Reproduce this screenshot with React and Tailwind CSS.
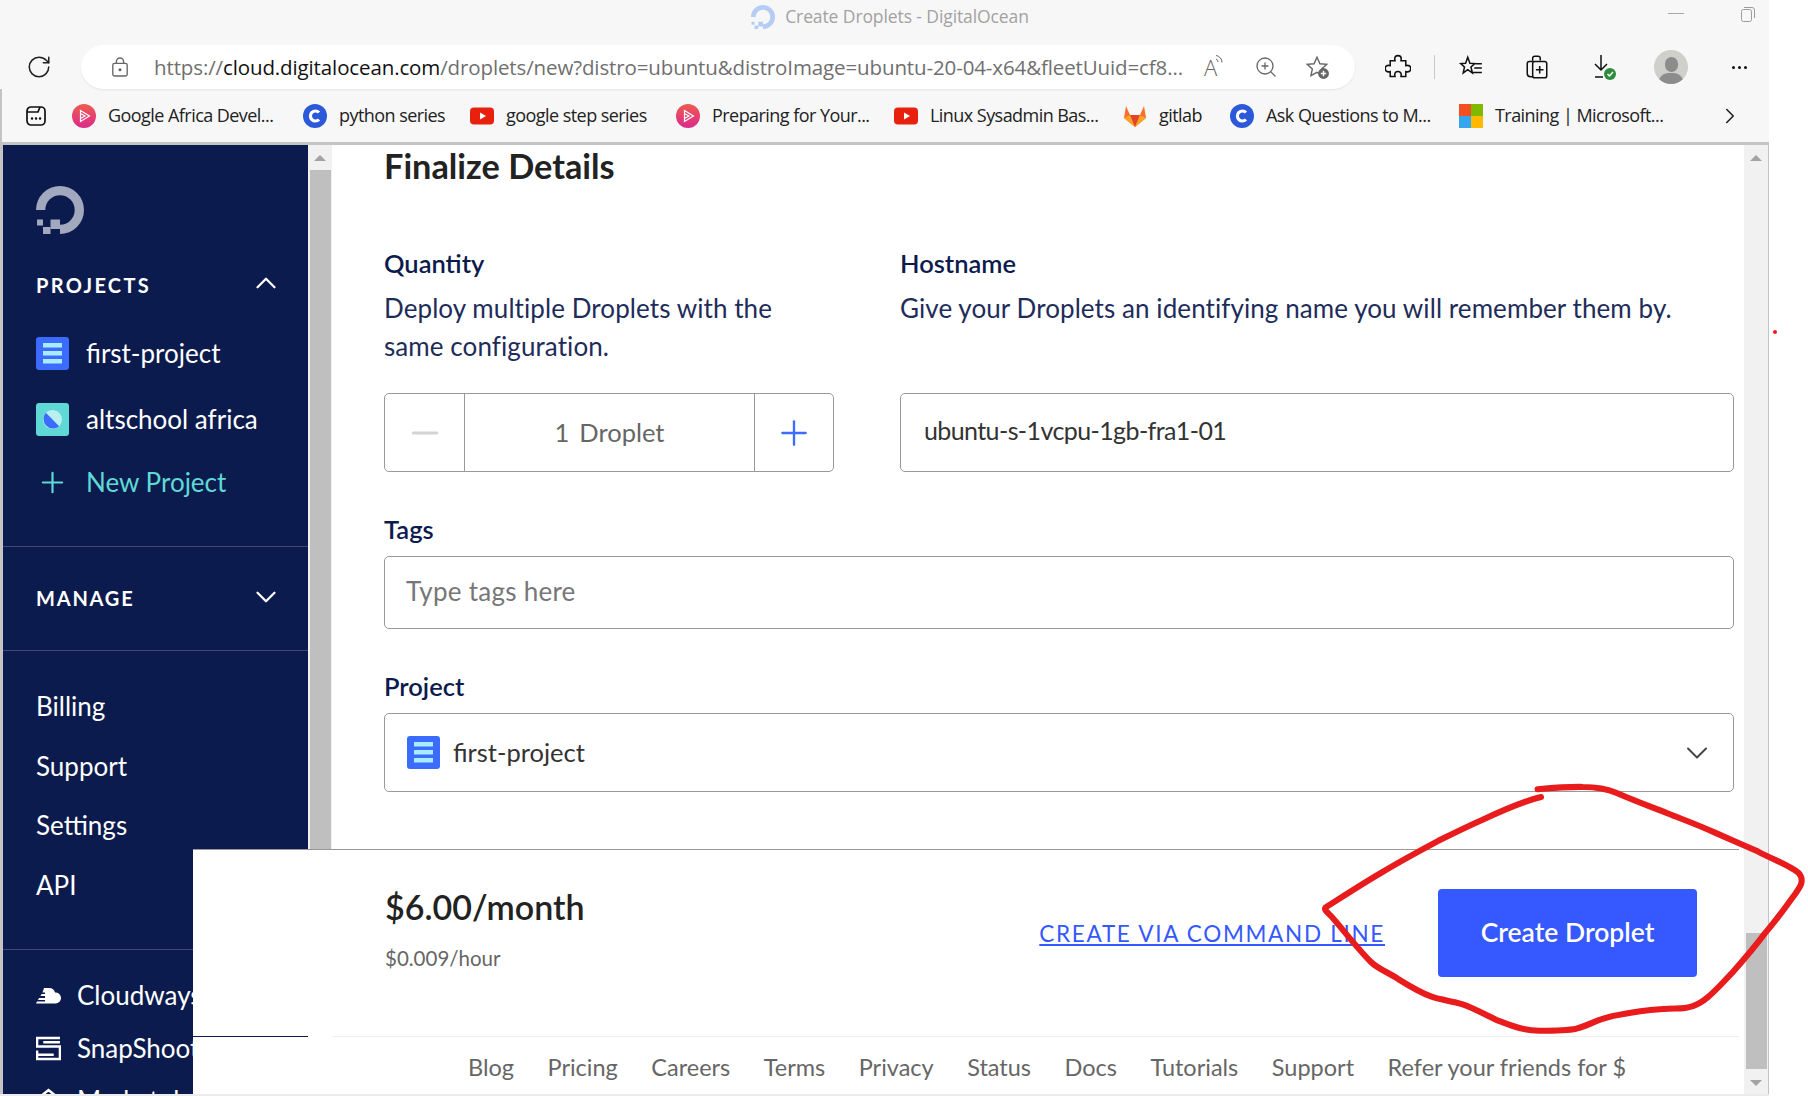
import { ChevronDown, ChevronRight, ChevronUp, Minus, Plus, RotateCw, ZoomIn } from "lucide-react";

const uiFont = "font-['Lato','Open_Sans',sans-serif]";
const chromeFont = "font-['Open_Sans','Noto_Sans',sans-serif]";

function DoLogo({ className, color }) {
  return (
    <svg viewBox="0 0 48 48" className={className} fill={color}>
      <path d="M24 48v-9.300a14.700 14.700 0 1 0-14.700-14.700H0a24 24 0 1 1 24 24z" />
      <rect x="14.500" y="33.500" width="9.500" height="9.500" />
      <rect x="7" y="41" width="7.500" height="7" />
      <rect x="1" y="33.500" width="6" height="6" />
    </svg>
  );
}

function ProjectIcon({ className }) {
  return (
    <svg viewBox="0 0 33 33" className={className}>
      <rect width="33" height="33" rx="3" fill="#3b6cff" />
      <rect x="7" y="6" width="19" height="4.500" fill="#a8ecff" />
      <rect x="7" y="14" width="19" height="4.500" fill="#a8ecff" />
      <rect x="7" y="22" width="19" height="4.500" fill="#a8ecff" />
    </svg>
  );
}

function AltIcon() {
  return (
    <svg viewBox="0 0 33 33" className="w-[33px] h-[33px]">
      <rect width="33" height="33" rx="3" fill="#5fd9d6" />
      <circle cx="16.500" cy="16.500" r="9.500" fill="#b9f0ef" />
      <path d="M9.800 9.800a9.500 9.500 0 0 0 13.400 13.400z" fill="#3b6cff" />
    </svg>
  );
}

function CircleC() {
  return (
    <svg viewBox="0 0 24 24" className="w-6 h-6">
      <circle cx="12" cy="12" r="12" fill="#2b59d9" />
      <path d="M16 8.500a5 5 0 1 0 0 7" fill="none" stroke="#fff" strokeWidth="3.200" />
    </svg>
  );
}

function Youtube() {
  return (
    <svg viewBox="0 0 24 24" className="w-6 h-6">
      <rect y="3.500" width="24" height="17" rx="4" fill="#e8210f" />
      <path d="M10 8.500l6 3.500-6 3.500z" fill="#fff" />
    </svg>
  );
}

function PlayBadge() {
  return (
    <svg viewBox="0 0 24 24" className="w-6 h-6">
      <defs>
        <linearGradient id="pb" x1="0" y1="0" x2="0" y2="1">
          <stop offset="0" stopColor="#ee5b4e" />
          <stop offset="1" stopColor="#dc2a8c" />
        </linearGradient>
      </defs>
      <circle cx="12" cy="12" r="12" fill="url(#pb)" />
      <path d="M8.500 6.500l9 5.500-9 5.500zM8.500 9.500l4.500 2.500-4.500 2.500" fill="none" stroke="#fff" strokeWidth="1.200" />
    </svg>
  );
}

function Gitlab() {
  return (
    <svg viewBox="0 0 24 24" className="w-6 h-6">
      <path d="M12 23L1 14l2-12 4 9h10l4-9 2 12z" fill="#fc6d26" />
      <path d="M12 23L7 11h10z" fill="#e24329" />
      <path d="M12 23L1 14l6-3zM12 23l11-9-6-3z" fill="#fca326" />
    </svg>
  );
}

function Microsoft() {
  return (
    <div className="grid grid-cols-2 gap-0 w-6 h-6 shrink-0">
      <div className="bg-[#f25022]" />
      <div className="bg-[#7fba00]" />
      <div className="bg-[#36a5f0]" />
      <div className="bg-[#ffb900]" />
    </div>
  );
}

const bookmarks = [
  { icon: <PlayBadge />, label: "Google Africa Devel...", width: "w-[231px]" },
  { icon: <CircleC />, label: "python series", width: "w-[167px]" },
  { icon: <Youtube />, label: "google step series", width: "w-[206px]" },
  { icon: <PlayBadge />, label: "Preparing for Your...", width: "w-[218px]" },
  { icon: <Youtube />, label: "Linux Sysadmin Bas...", width: "w-[229px]" },
  { icon: <Gitlab />, label: "gitlab", width: "w-[107px]" },
  { icon: <CircleC />, label: "Ask Questions to M...", width: "w-[229px]" },
  { icon: <Microsoft />, label: "Training | Microsoft...", width: "w-[220px]" },
];

function BrowserChrome() {
  return (
    <div className={`bg-[#f7f7f7] h-[145px] w-[1769px] border-b-[3px] border-[#c4c4c4] flex flex-col text-black ${chromeFont}`}>
      <div className="h-[45px] flex items-center relative">
        <div className="flex-1 flex items-center justify-center gap-[10px] pl-[112px] pb-[12px]">
          <DoLogo className="w-[24px] h-[24px]" color="#b5cdf5" />
          <span className="text-[17.500px] text-[#a2a2a2] tracking-[-0.1px]">Create Droplets - DigitalOcean</span>
        </div>
        <div className="flex items-center gap-[56px] pr-[13px] pb-[18px]">
          <div className="w-[16px] h-px bg-[#a8a8a8]" />
          <svg viewBox="0 0 16 16" className="w-[16px] h-[16px]" fill="none" stroke="#9c9c9c">
            <rect x="1.500" y="3.500" width="10" height="12" rx="2" />
            <path d="M4 1.500h8a2.500 2.500 0 0 1 2.500 2.500v8" />
          </svg>
        </div>
      </div>
      <div className="h-[44px] flex items-center">
        <RotateCw className="w-[26px] h-[26px] ml-[26px] mr-[29px] text-[#222]" strokeWidth={1.4} />
        <div className="w-[1274px] h-[44px] bg-white rounded-full flex items-center pl-[30px] pr-[22px] shadow-[0_1px_2px_rgba(0,0,0,0.08)]">
          <svg viewBox="0 0 20 24" className="w-[18px] h-[22px] shrink-0" fill="none" stroke="#666" strokeWidth="1.500">
            <rect x="2" y="8" width="16" height="14" rx="2" />
            <path d="M6 8V6a4 4 0 0 1 8 0v2" />
            <circle cx="10" cy="15" r="1" fill="#666" />
          </svg>
          <div className="ml-[25px] w-[1032px] text-[20.500px] tracking-[-0.12px] whitespace-nowrap overflow-hidden text-[#6f6f6f]">
            https://<span className="text-[#111]">cloud.digitalocean.com</span>/droplets/new?distro=ubuntu&amp;distroImage=ubuntu-20-04-x64&amp;fleetUuid=cf8...
          </div>
          <div className="flex items-center gap-[26px] ml-[18px] text-[#666]">
            <div className="flex items-start w-[24px] h-[26px]">
              <span className="text-[22px] leading-[26px] font-light">A</span>
              <svg viewBox="0 0 8 10" className="w-[8px] h-[10px] -ml-[2px] shrink-0" fill="none" stroke="#666" strokeWidth="1">
                <path d="M1 5a3 3 0 0 1 2 3M1 1.500a7 7 0 0 1 6 7" />
              </svg>
            </div>
            <ZoomIn className="w-[24px] h-[24px]" strokeWidth={1.3} />
            <svg viewBox="0 0 24 24" className="w-[26px] h-[26px]" fill="none" stroke="#666" strokeWidth="1.300">
              <path d="M12 3l2.700 6 6.300.6-4.700 4.200 1.300 6.200L12 17l-5.600 3 1.300-6.200L3 9.600 9.300 9z" />
              <circle cx="18" cy="18" r="5" fill="#666" stroke="none" />
              <path d="M18 15.500v5M15.500 18h5" stroke="#fff" strokeWidth="1.300" />
            </svg>
          </div>
        </div>
        <div className="flex items-center ml-[30px] text-[#111]">
          <svg viewBox="0 0 24 24" className="w-[26px] h-[26px]" fill="none" stroke="#111" strokeWidth="1.400">
            <path d="M9 4.500a3 3 0 0 1 6 0c0 .8-.3 1.200-.3 1.700h4.500v4.600c.5 0 .9-.3 1.600-.3a3 3 0 0 1 0 6c-.7 0-1.100-.3-1.600-.3v4.600h-4.500c0-.5.300-.9.300-1.700a3 3 0 0 0-6 0c0 .8.300 1.200.3 1.700H4.800v-4.600c-.5 0-.9.300-1.600.3a3 3 0 0 1 0-6c.7 0 1.100.3 1.600.3V6.200h4.500C9.300 5.700 9 5.300 9 4.500z" />
          </svg>
          <div className="w-px h-[24px] bg-[#c8c8c8] ml-[23px]" />
          <svg viewBox="0 0 24 24" className="w-[26px] h-[26px] ml-[23px]" fill="none" stroke="#111" strokeWidth="1.400">
            <path d="M9 3l2 5.500 4.500.3-3.500 3.200 1.200 5.500L9 14.500 4.800 17.500 6 12 2.500 8.800 7 8.500z" />
            <path d="M16 9h6M15 13h7M13 17h9" />
          </svg>
          <svg viewBox="0 0 24 24" className="w-[26px] h-[26px] ml-[40px]" fill="none" stroke="#111" strokeWidth="1.400">
            <path d="M8 7V4a2 2 0 0 1 2-2h3a2 2 0 0 1 2 2v2" />
            <path d="M8 21H6a3 3 0 0 1-3-3V9a2 2 0 0 1 2-2h3" />
            <rect x="8" y="7" width="13" height="15" rx="2" />
            <path d="M14.500 11v7M11 14.500h7" />
          </svg>
          <svg viewBox="0 0 28 28" className="w-[28px] h-[28px] ml-[40px]" fill="none" stroke="#111" strokeWidth="1.500">
            <path d="M11 2v15M5 11l6 6 6-6M5 24h8" />
            <circle cx="20" cy="21" r="6" fill="#2e8b3c" stroke="none" />
            <path d="M17.500 21l2 2 3.500-4" stroke="#fff" />
          </svg>
          <div className="w-[34px] h-[34px] rounded-full bg-[#cfcfcb] ml-[36px] flex flex-col items-center justify-end overflow-hidden">
            <div className="w-[13px] h-[15px] rounded-full bg-[#8c8c8c] mb-[1px]" />
            <div className="w-[26px] h-[11px] rounded-t-full bg-[#8c8c8c]" />
          </div>
          <div className="flex gap-[3px] ml-[44px]">
            <div className="w-[3px] h-[3px] rounded-full bg-[#111]" />
            <div className="w-[3px] h-[3px] rounded-full bg-[#111]" />
            <div className="w-[3px] h-[3px] rounded-full bg-[#111]" />
          </div>
        </div>
      </div>
      <div className="flex-1 flex items-center border-l-[2px] border-[#c4c4c4] text-[#222]">
        <svg viewBox="0 0 24 24" className="w-[24px] h-[24px] ml-[22px] mr-[24px] shrink-0" fill="none" stroke="#111" strokeWidth="1.700">
          <rect x="3" y="3" width="18" height="18" rx="4" />
          <path d="M3 8h11l2-5" />
          <path d="M8 14.500h.1M12 14.500h.1M16 14.500h.1" strokeWidth="2.400" strokeLinecap="round" />
        </svg>
        {bookmarks.map((b) => (
          <div key={b.label} className={`flex items-center gap-[12px] shrink-0 ${b.width}`}>
            {b.icon}
            <span className="text-[18px] tracking-[-0.55px] whitespace-nowrap">{b.label}</span>
          </div>
        ))}
        <ChevronRight className="w-[26px] h-[26px] ml-[38px] text-[#222]" strokeWidth={1.5} />
      </div>
    </div>
  );
}

function Sidebar() {
  return (
    <aside className="w-[305px] h-full shrink-0 bg-[#0c1b4d] text-white overflow-hidden pl-[33px] pr-[25px] text-[26px]">
      <DoLogo className="w-[48px] h-[48px] mt-[41px]" color="#a2a8bd" />
      <div className="flex items-center justify-between mt-[40px] h-[22px]">
        <span className="text-[20px] font-bold tracking-[2.300px]">PROJECTS</span>
        <ChevronUp className="w-[34px] h-[34px] -mt-[4px]" strokeWidth={1.6} />
      </div>
      <div className="flex items-center gap-[17px] h-[33px] mt-[41px]">
        <ProjectIcon className="w-[33px] h-[33px]" />
        <span>first-project</span>
      </div>
      <div className="flex items-center gap-[17px] h-[33px] mt-[33px]">
        <AltIcon />
        <span>altschool africa</span>
      </div>
      <div className="flex items-center gap-[17px] h-[33px] mt-[30px] text-[#5fd9d6]">
        <Plus className="w-[33px] h-[33px]" strokeWidth={1.6} />
        <span>New Project</span>
      </div>
      <div className="h-px bg-[#3d4a74] -mx-[33px] mt-[47px]" />
      <div className="flex items-center justify-between mt-[40px] h-[22px]">
        <span className="text-[20px] font-bold tracking-[1.800px]">MANAGE</span>
        <ChevronDown className="w-[34px] h-[34px] -mt-[2px]" strokeWidth={1.6} />
      </div>
      <div className="h-px bg-[#3d4a74] -mx-[33px] mt-[41px]" />
      <div className="flex flex-col gap-[26.500px] mt-[39px] leading-[33px]">
        <span>Billing</span>
        <span>Support</span>
        <span>Settings</span>
        <span>API</span>
      </div>
      <div className="h-px bg-[#3d4a74] -mx-[33px] mt-[47px]" />
      <div className="flex items-center gap-[16px] mt-[29px] h-[33px] whitespace-nowrap">
        <svg viewBox="0 0 25 17" className="w-[25px] h-[17px] shrink-0" fill="#fff">
          <path d="M8 1h5a6 6 0 0 1 6 4.500 5.500 5.500 0 0 1 1 11H0l1-2h8v-1.500H2l1-2h6V9H4.500l1-2H9V5.500H6.500z" />
        </svg>
        <span>Cloudways</span>
      </div>
      <div className="flex items-center gap-[16px] mt-[20px] h-[33px] whitespace-nowrap">
        <svg viewBox="0 0 24 24" className="w-[25px] h-[25px] shrink-0" fill="none" stroke="#fff" strokeWidth="2.400">
          <path d="M23 2H1v8h22v12H1v-8M23 6H7M1 18h16" />
        </svg>
        <span>SnapShooter</span>
      </div>
      <div className="flex items-center gap-[16px] mt-[19px] h-[33px] whitespace-nowrap">
        <svg viewBox="0 0 24 24" className="w-[25px] h-[25px] shrink-0" fill="none" stroke="#fff" strokeWidth="2.400">
          <path d="M2 10l10-8 10 8v12H2z" />
        </svg>
        <span>Marketplace</span>
      </div>
    </aside>
  );
}

const inputBox = "border border-[#999] rounded-[5px] bg-white";
const labelText = "text-[25.500px] leading-[30px] font-semibold text-[#0c1b4d]";
const bodyText = "text-[26px] leading-[38px] tracking-[0.08px] text-[#1e2c5a]";

function FormArea() {
  return (
    <main className="flex-1 h-full bg-white pl-[52px] pr-[10px]">
      <h1 className="text-[34.300px] leading-[40px] font-bold text-[#222] mt-[1px]">Finalize Details</h1>
      <div className="flex mt-[62px]">
        <div className="w-[516px] shrink-0">
          <div className={labelText}>Quantity</div>
          <p className={`${bodyText} mt-[11px] w-[420px]`}>Deploy multiple Droplets with the same configuration.</p>
          <div className={`${inputBox} w-[450px] h-[79px] flex mt-[28px]`}>
            <div className="w-[80px] flex items-center justify-center border-r border-[#999]">
              <Minus className="w-[40px] h-[40px] text-[#d4d4d4]" strokeWidth={1.8} />
            </div>
            <div className="flex-1 flex items-center justify-center text-[25.500px] text-[#666] gap-[10px]">
              <span>1</span>
              <span>Droplet</span>
            </div>
            <div className="w-[79px] flex items-center justify-center border-l border-[#999]">
              <Plus className="w-[40px] h-[40px] text-[#3b6cff]" strokeWidth={1.4} />
            </div>
          </div>
        </div>
        <div className="flex-1">
          <div className={labelText}>Hostname</div>
          <p className={`${bodyText} mt-[11px] whitespace-nowrap`}>Give your Droplets an identifying name you will remember them by.</p>
          <div className={`${inputBox} h-[79px] flex items-center pl-[23px] pb-[3px] text-[25px] tracking-[-0.6px] text-[#333] mt-[66px]`}>ubuntu-s-1vcpu-1gb-fra1-01</div>
        </div>
      </div>
      <div className={`${labelText} mt-[42px]`}>Tags</div>
      <div className={`${inputBox} h-[73px] flex items-center pl-[21px] pb-[3px] text-[26px] tracking-[0.25px] text-[#777] mt-[12px]`}>Type tags here</div>
      <div className={`${labelText} mt-[42px]`}>Project</div>
      <div className={`${inputBox} h-[79px] flex items-center pl-[22px] pr-[18px] text-[25.500px] text-[#333] gap-[13px] mt-[12px]`}>
        <ProjectIcon className="w-[33px] h-[33px]" />
        <span className="flex-1">first-project</span>
        <ChevronDown className="w-[36px] h-[36px] text-[#444]" strokeWidth={1.3} />
      </div>
    </main>
  );
}

function Scrollbar({ thumbTop }) {
  return (
    <div className="w-[24px] h-full shrink-0 bg-[#f1f1f1] flex flex-col items-center">
      <div className="h-[25px] flex items-center justify-center">
        <div className="border-x-[6px] border-x-transparent border-b-[6px] border-b-[#a3a3a3]" />
      </div>
      {thumbTop ? (
        <div className="w-[21px] flex-1 bg-[#bfbfbf]" />
      ) : (
        <>
          <div className="flex-1" />
          <div className="w-[21px] h-[136px] bg-[#bfbfbf]" />
          <div className="h-[27px] flex items-center justify-center">
            <div className="border-x-[6px] border-x-transparent border-t-[6px] border-t-[#a3a3a3]" />
          </div>
        </>
      )}
    </div>
  );
}

const footerLinks = ["Blog", "Pricing", "Careers", "Terms", "Privacy", "Status", "Docs", "Tutorials", "Support", "Refer your friends for $"];

function PriceBar() {
  return (
    <div className="absolute left-[193px] top-[849px] w-[1546px] h-[247px] bg-white">
      <div className="h-[187px] border-t border-[#999] flex items-center pl-[192px] pr-[42px] pb-[20px]">
        <div className="flex-1 -mt-[8px]">
          <div className="text-[34px] leading-[42px] font-semibold text-[#222]">$6.00/month</div>
          <div className="text-[20.500px] leading-[28px] text-[#666] mt-[16px]">$0.009/hour</div>
        </div>
        <a className="text-[22.500px] tracking-[1.700px] text-[#3558ff] underline mr-[53px] mt-[1px]">CREATE VIA COMMAND LINE</a>
        <button className="w-[259px] h-[88px] rounded-[4px] bg-[#3558ff] text-white text-[26.500px] font-semibold">Create Droplet</button>
      </div>
      <div className="relative h-[60px]">
        <div className="h-px bg-[#0c1b4d] w-[115px]" />
        <div className="absolute left-[139px] right-0 top-0 h-px bg-[#eeeeee]" />
        <div className="flex items-center h-[61px] pl-[275px] gap-[33.500px] text-[23.500px] text-[#666]">
          {footerLinks.map((l) => (
            <span key={l}>{l}</span>
          ))}
        </div>
      </div>
    </div>
  );
}

function RedCircle() {
  return (
    <svg viewBox="0 0 1568 998" className="absolute left-[1280px] top-[760px] w-[528px] h-[336px] pointer-events-none" fill="none" stroke="#e81c1c" strokeWidth="18" strokeLinecap="round" strokeLinejoin="round">
      <path d="M775 110 C740 118 660 150 600 178 C550 200 510 220 470 240 C410 272 350 305 300 335 C240 370 190 403 135 438 C130 445 140 452 150 462 C180 495 230 560 270 600 C290 620 320 630 350 650 C385 672 420 692 450 703 C480 714 510 715 540 725 C580 738 610 758 650 775 C690 790 720 803 770 804 C810 804 850 804 880 798 C910 790 930 778 960 768 C990 758 1030 752 1070 746 C1110 741 1140 738 1175 738 C1215 738 1240 730 1270 705 C1300 680 1320 655 1345 630 C1380 590 1410 555 1440 515 C1470 480 1500 440 1525 405 C1545 378 1560 358 1540 335 C1510 312 1470 298 1420 272 C1370 250 1340 237 1290 215 C1240 192 1200 178 1150 158 C1100 138 1050 120 1000 98 C970 85 940 80 900 80 C860 79 810 83 765 87" />
    </svg>
  );
}

export default function App() {
  return (
    <div className={`relative w-[1808px] h-[1096px] overflow-hidden bg-white ${uiFont}`}>
      <BrowserChrome />
      <div className="flex h-[951px] w-[1769px] border-l-[3px] border-[#c4c4c4] border-r border-r-[#c4c4c4]">
        <Sidebar />
        <Scrollbar thumbTop />
        <FormArea />
        <Scrollbar />
      </div>
      <PriceBar />
      <div className="absolute left-0 right-[39px] bottom-0 h-[2px] bg-[#ececec]" />
      <div className="absolute left-[1773px] top-[330px] w-[4px] h-[4px] rounded-full bg-[#e81c1c]" />
      <RedCircle />
    </div>
  );
}
